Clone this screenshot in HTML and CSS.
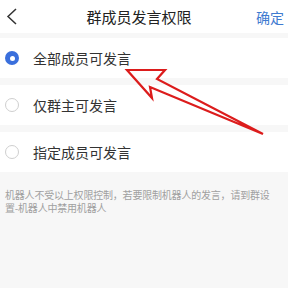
FILE: index.html
```html
<!DOCTYPE html>
<html lang="zh">
<head>
<meta charset="utf-8">
<link rel="stylesheet" href="styles.css">
</head>
<body>
<div class="page">
  <header class="topbar">
    <svg class="back" width="12" height="17" viewBox="0 0 12 17"><polyline points="10,1 2,8.5 10,16" fill="none" stroke="#333" stroke-width="1.5"/></svg>
    <div class="title">群成员发言权限</div>
    <div class="ok">确定</div>
  </header>
  <div class="list">
    <div class="row"><span class="radio on"></span><span class="label">全部成员可发言</span></div>
    <div class="row"><span class="radio"></span><span class="label">仅群主可发言</span></div>
    <div class="row"><span class="radio"></span><span class="label">指定成员可发言</span></div>
  </div>
  <p class="note">机器人不受以上权限控制，若要限制机器人的发言，请到群设置-机器人中禁用机器人</p>
  <svg class="arrow" width="288" height="288" viewBox="0 0 288 288">
    <polygon points="127,70 165,70 157,79 263,134 150,87 152,98" fill="none" stroke="#dc1c1c" stroke-width="2.2" stroke-linejoin="miter"/>
  </svg>
</div>
</body>
</html>
```
FILE: styles.css
```css
html, body {
  margin: 0;
  padding: 0;
}
body {
  background: #f7f7f7;
  font-family: "Noto Sans CJK SC", "Noto Sans", sans-serif;
  width: 288px;
  height: 288px;
  overflow: hidden;
}
.page {
  position: relative;
  width: 288px;
  height: 288px;
  display: flex;
  flex-direction: column;
}
.topbar {
  height: 33px;
  background: #fff;
  display: flex;
  align-items: center;
  justify-content: space-between;
  padding: 0 4px 0 6px;
}
.back {
  width: 12px;
  height: 17px;
}
.title {
  font-size: 15px;
  color: #222;
  margin-left: 4px;
}
.ok {
  font-size: 14px;
  color: #3f7bd0;
}
.list {
  display: flex;
  flex-direction: column;
  gap: 7px;
  margin-top: 5px;
}
.row {
  height: 40px;
  background: #fff;
  display: flex;
  align-items: center;
  padding-left: 5px;
  gap: 14px;
}
.radio {
  width: 14px;
  height: 14px;
  border-radius: 50%;
  box-sizing: border-box;
  border: 1px solid #cfcfcf;
  background: #fff;
  position: relative;
}
.radio.on {
  border: none;
  background: #3a6fdc;
}
.radio.on::after {
  content: "";
  position: absolute;
  left: 4.5px;
  top: 4.5px;
  width: 5px;
  height: 5px;
  border-radius: 50%;
  background: #fff;
}
.label {
  font-size: 14px;
  color: #333;
}
.note {
  margin: 16px 10px 0 5px;
  font-size: 10px;
  line-height: 13px;
  letter-spacing: -0.2px;
  color: #a0a0a0;
}
.arrow {
  position: absolute;
  left: 0;
  top: 0;
  pointer-events: none;
}
```
